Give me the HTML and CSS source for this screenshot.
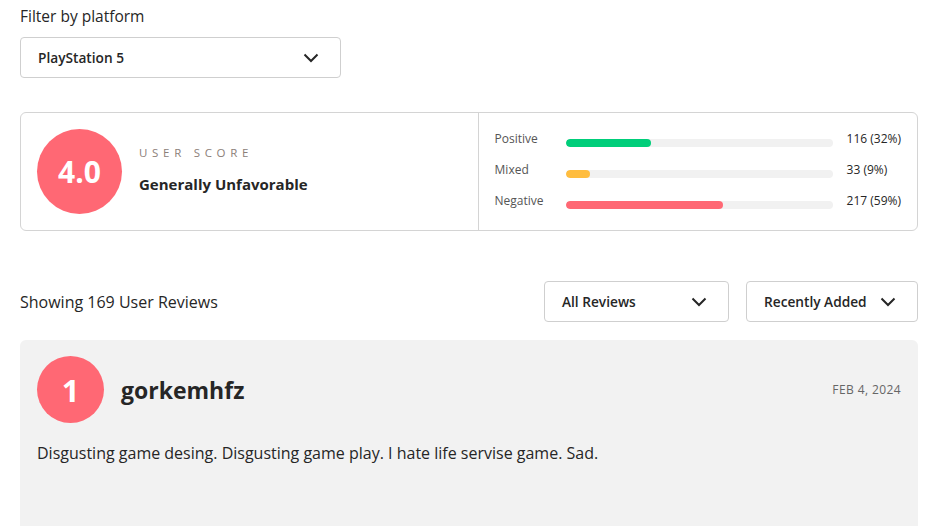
FILE: index.html
```html
<!DOCTYPE html>
<html>
<head>
<meta charset="utf-8">
<link rel="stylesheet" href="styles.css">
</head>
<body>
<div class="page">
  <div class="filter-label">Filter by platform</div>
  <div class="select platform">
    <span>PlayStation 5</span>
    <svg class="chev" width="16" height="10" viewBox="0 0 16 10"><path d="M1.5 1.5 L8 8 L14.5 1.5" fill="none" stroke="#262626" stroke-width="2"/></svg>
  </div>

  <div class="score-card">
    <div class="score-left">
      <div class="score-circle">4.0</div>
      <div class="score-info">
        <div class="score-label">USER SCORE</div>
        <div class="score-desc">Generally Unfavorable</div>
      </div>
    </div>
    <div class="score-right">
      <div class="bar-row">
        <span class="bar-label">Positive</span>
        <div class="bar"><div class="fill green" style="width:32%"></div></div>
        <span class="bar-value">116 (32%)</span>
      </div>
      <div class="bar-row">
        <span class="bar-label">Mixed</span>
        <div class="bar"><div class="fill yellow" style="width:9%"></div></div>
        <span class="bar-value">33 (9%)</span>
      </div>
      <div class="bar-row">
        <span class="bar-label">Negative</span>
        <div class="bar"><div class="fill red" style="width:59%"></div></div>
        <span class="bar-value">217 (59%)</span>
      </div>
    </div>
  </div>

  <div class="reviews-head">
    <div class="showing">Showing 169 User Reviews</div>
    <div class="head-selects">
      <div class="select all">
        <span>All Reviews</span>
        <svg class="chev" width="16" height="10" viewBox="0 0 16 10"><path d="M1.5 1.5 L8 8 L14.5 1.5" fill="none" stroke="#262626" stroke-width="2"/></svg>
      </div>
      <div class="select recent">
        <span>Recently Added</span>
        <svg class="chev" width="16" height="10" viewBox="0 0 16 10"><path d="M1.5 1.5 L8 8 L14.5 1.5" fill="none" stroke="#262626" stroke-width="2"/></svg>
      </div>
    </div>
  </div>

  <div class="review">
    <div class="review-top">
      <div class="review-score">1</div>
      <div class="review-user">gorkemhfz</div>
      <div class="review-date">FEB 4, 2024</div>
    </div>
    <p class="review-text">Disgusting game desing. Disgusting game play. I hate life servise game. Sad.</p>
  </div>
</div>
</body>
</html>
```

FILE: styles.css
```css
* { box-sizing: border-box; }
body {
  margin: 0;
  background: #fff;
  font-family: "Open Sans", "Lato", sans-serif;
  color: #262626;
}
.page {
  padding: 5px 19px 0 20px;
  width: 937px;
}
.filter-label {
  font-size: 15.5px;
  line-height: 22px;
  color: #262626;
}
.select {
  display: flex;
  align-items: center;
  justify-content: space-between;
  height: 41px;
  border: 1px solid #cfcfcf;
  border-radius: 4px;
  background: #fff;
  font-size: 13.7px;
  font-weight: 600;
  color: #262626;
}
.platform {
  margin-top: 10px;
  width: 321px;
  padding: 0 21px 0 17px;
}
.chev { display: block; }
.score-card {
  margin-top: 34px;
  display: flex;
  height: 119px;
  border: 1px solid #d4d4d4;
  border-radius: 6px;
}
.score-left {
  width: 458px;
  display: flex;
  align-items: center;
  padding-left: 16px;
  border-right: 1px solid #d4d4d4;
}
.score-circle {
  width: 85px;
  height: 85px;
  border-radius: 50%;
  background: #ff6874;
  color: #fff;
  font-size: 30px;
  font-weight: 700;
  display: flex;
  align-items: center;
  justify-content: center;
  flex-shrink: 0;
}
.score-info {
  margin-left: 17px;
  margin-top: -5px;
}
.score-label {
  font-size: 11.5px;
  letter-spacing: 4.7px;
  color: #8c8079;
  line-height: 16px;
}
.score-desc {
  margin-top: 13px;
  font-size: 15px;
  font-weight: 700;
  color: #262626;
}
.score-right {
  flex: 1;
  padding: 18px 16px 0 16px;
  display: flex;
  flex-direction: column;
  gap: 13px;
}
.bar-row {
  display: flex;
  align-items: center;
  height: 18px;
  white-space: nowrap;
}
.bar-label {
  width: 71px;
  flex-shrink: 0;
  font-size: 12px;
  color: #555;
  margin-top: -4px;
}
.bar {
  width: 267px;
  flex-shrink: 0;
  height: 8px;
  border-radius: 4px;
  background: #f1f1f1;
  margin-top: 6px;
  overflow: hidden;
}
.fill { height: 100%; border-radius: 4px; }
.green { background: #00ce7a; }
.yellow { background: #ffbd3f; }
.red { background: #ff6874; }
.bar-value {
  margin-left: 14px;
  font-size: 12px;
  color: #262626;
  margin-top: -4px;
}
.reviews-head {
  margin-top: 50px;
  display: flex;
  align-items: center;
  justify-content: space-between;
}
.showing {
  font-size: 16px;
  color: #262626;
}
.head-selects {
  display: flex;
  gap: 17px;
}
.all {
  width: 185px;
  padding: 0 21px 0 17px;
}
.recent {
  width: 172px;
  padding: 0 21px 0 17px;
}
.review {
  margin-top: 18px;
  background: #f2f2f2;
  border-radius: 6px;
  height: 200px;
  padding: 16px 17px;
}
.review-top {
  display: flex;
  align-items: center;
}
.review-score {
  width: 67px;
  height: 67px;
  border-radius: 50%;
  background: #ff6874;
  color: #fff;
  font-size: 31px;
  font-weight: 700;
  display: flex;
  align-items: center;
  justify-content: center;
}
.review-user {
  margin-left: 17px;
  font-size: 23px;
  font-weight: 700;
  color: #262626;
}
.review-date {
  margin-left: auto;
  font-size: 12px;
  letter-spacing: 0.4px;
  color: #666;
}
.review-text {
  margin: 19px 0 0;
  font-size: 16px;
  color: #262626;
}
```
